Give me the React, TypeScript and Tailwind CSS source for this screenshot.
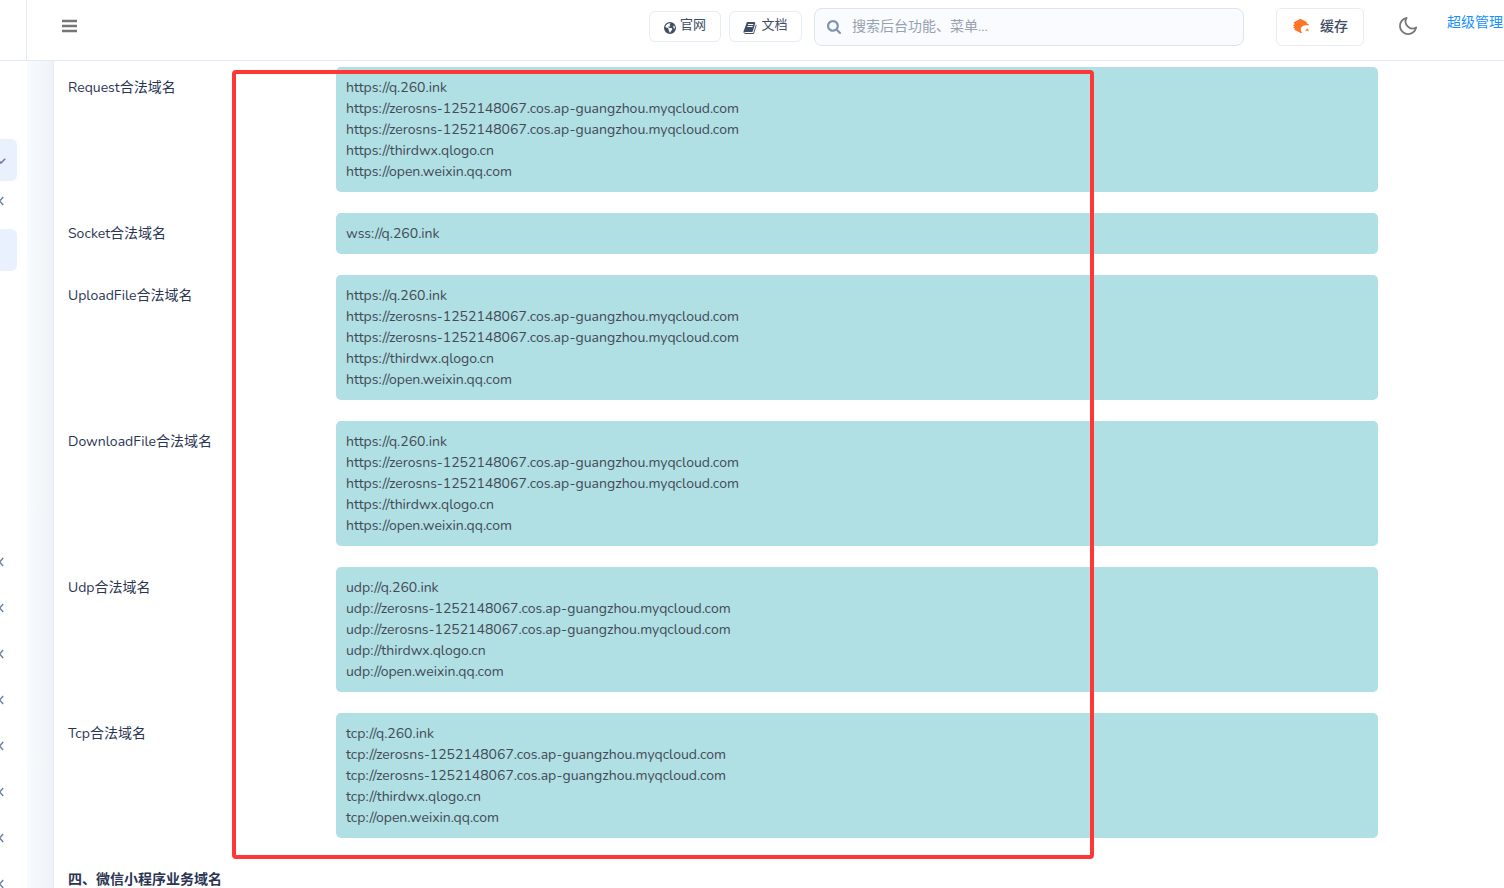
import React from 'react';
import { FaEarthAmericas } from 'react-icons/fa6';

const hosts = [
  'q.260.ink',
  'zerosns-1252148067.cos.ap-guangzhou.myqcloud.com',
  'zerosns-1252148067.cos.ap-guangzhou.myqcloud.com',
  'thirdwx.qlogo.cn',
  'open.weixin.qq.com',
];

const rows = [
  { label: 'Request合法域名', urls: hosts.map((h) => `https://${h}`) },
  { label: 'Socket合法域名', urls: ['wss://q.260.ink'] },
  { label: 'UploadFile合法域名', urls: hosts.map((h) => `https://${h}`) },
  { label: 'DownloadFile合法域名', urls: hosts.map((h) => `https://${h}`) },
  { label: 'Udp合法域名', urls: hosts.map((h) => `udp://${h}`) },
  { label: 'Tcp合法域名', urls: hosts.map((h) => `tcp://${h}`) },
];

const collapsedItems = [1, 2, 3, 4, 5, 6, 7, 8];

function AngleLeft() {
  return (
    <svg viewBox="0 0 6 10" className="h-[10px] w-[6px] shrink-0" fill="none" stroke="#6b7f9e" strokeWidth="1.4" aria-hidden="true">
      <path d="M5.2 1 L1.6 5 L5.2 9" />
    </svg>
  );
}

function AngleDown() {
  return (
    <svg viewBox="0 0 10 6" className="h-[6px] w-[10px] shrink-0" fill="none" stroke="#6b7f9e" strokeWidth="1.6" aria-hidden="true">
      <path d="M0.8 0.8 L5 5 L9.2 0.8" />
    </svg>
  );
}

function BookIcon() {
  return (
    <svg viewBox="0 0 1792 1792" className="mt-1 size-[14px]" fill="currentColor" aria-hidden="true">
      <path d="M1703 478q40 57 18 129l-275 906q-19 64-76.5 107.5t-122.5 43.5h-923q-77 0-148.5-53.5t-99.5-131.5q-24-67-2-127 0-4 3-27t4-37q1-8-3-21.5t-3-19.5q2-11 8-21t16.5-23.5 16.5-23.5q23-38 45-91.5t30-91.5q3-10 .5-30t-.5-28q3-11 17-28t17-23q21-36 42-92t25-90q1-9-2.5-32t.5-28q4-13 22-30.5t22-22.5q19-26 42.5-84.5t27.5-96.5q1-8-3-25.5t-2-26.5q2-8 9-18t18-23 17-21q8-12 16.5-30.5t15-35 16-36 19.5-32 26.5-23.5 36-11.5 47.5 5.5l-1 3q38-9 51-9h761q74 0 114 56t18 130l-274 906q-36 119-71.5 153.5t-128.5 34.5h-869q-27 0-38 15-11 16-1 43 24 70 144 70h923q29 0 56-15.5t35-41.5l300-987q7-22 5-57 38 15 59 43zm-1064 2q-4 13 2 22.5t20 9.5h608q13 0 25.5-9.5t16.5-22.5l21-64q4-13-2-22.5t-20-9.5h-608q-13 0-25.5 9.5t-16.5 22.5zm-83 256q-4 13 2 22.5t20 9.5h608q13 0 25.5-9.5t16.5-22.5l21-64q4-13-2-22.5t-20-9.5h-608q-13 0-25.5 9.5t-16.5 22.5z" />
    </svg>
  );
}

function SearchIcon() {
  return (
    <svg viewBox="0 128 1664 1664" className="size-[14px] shrink-0 text-[#8193ad]" fill="currentColor" aria-hidden="true">
      <path d="M1152 832q0-185-131.5-316.5t-316.5-131.5-316.5 131.5-131.5 316.5 131.5 316.5 316.5 131.5 316.5-131.5 131.5-316.5zm512 832q0 52-38 90t-90 38q-54 0-90-38l-343-342q-179 124-399 124-143 0-273.5-55.5t-225-150-150-225-55.5-273.5 55.5-273.5 150-225 225-150 273.5-55.5 273.5 55.5 225 150 150 225 55.5 273.5q0 220-124 399l343 343q37 37 37 90z" />
    </svg>
  );
}

function CacheMark() {
  return (
    <svg viewBox="0 0 18 16" className="h-4 w-[18px]" aria-hidden="true">
      <path
        fill="#ff7426"
        d="M8.5 0.8 L14.8 4 L14.8 5.4 L17 6.2 L16.2 7.4 C12 6.4 8.8 8.4 8.8 11.4 C8.8 13 9.4 14.2 10.4 14.8 L8.6 15 L2 11.6 L3 10.6 L1 9.6 L2.8 8.6 L0.8 7.2 L2.8 6.2 L1.4 4.6 Z"
      />
      <path fill="#ff7426" d="M12.8 12.8 L14 12 L15 10.2 L16.2 11.6 L17 12.8 Z" />
    </svg>
  );
}

function Header() {
  return (
    <header className="flex h-[61px] shrink-0 border-b border-[#e3eaf4] bg-white">
      <div className="w-[27px] shrink-0 border-r border-[#e3eaf4]" />
      <div className="flex min-w-0 flex-1 items-start pt-2 pl-[34px]">
        <button type="button" aria-label="菜单" className="flex h-9 w-4 items-center justify-center text-[#757575]">
          <svg viewBox="0 0 16 14" className="h-[14px] w-4" fill="currentColor" aria-hidden="true">
            <path d="M1 .8h15v2.4H1zM1 5.8h15v2.4H1zM1 10.8h15v2.4H1z" />
          </svg>
        </button>
        <div className="ml-auto flex shrink-0 items-start">
          <a href="#site" className="mt-[3px] flex h-[31px] w-[72px] items-center justify-center gap-1 rounded-md border border-[#e6ecf5] pb-[2px] text-[13px] text-[#3f4d67]">
            <FaEarthAmericas className="mt-1 size-3" />
            官网
          </a>
          <a href="#docs" className="mt-[3px] ml-2 flex h-[31px] w-[73px] items-center justify-center gap-1 rounded-md border border-[#e6ecf5] pb-[2px] text-[13px] text-[#3f4d67]">
            <BookIcon />
            文档
          </a>
          <label className="ml-3 flex h-[38px] w-[430px] items-center gap-[11px] rounded-lg border border-[#dbe4f0] bg-[#f9fbff] px-3">
            <SearchIcon />
            <input
              type="text"
              aria-label="搜索"
              placeholder="搜索后台功能、菜单..."
              className="min-w-0 flex-1 bg-transparent pb-[2px] text-[14px] outline-none placeholder:text-[#98a1b0]"
            />
          </label>
          <button type="button" className="ml-8 flex h-[38px] w-[88px] items-center justify-center gap-[10px] rounded-md border border-[#e6ecf5] pb-[2px] text-[14px] font-medium text-[#3f4d67]">
            <CacheMark />
            缓存
          </button>
          <button type="button" aria-label="深色模式" className="ml-[34px] flex h-9 w-5 items-center justify-center text-[#777777]">
            <svg viewBox="0 0 20 20" className="size-5" fill="none" stroke="currentColor" strokeWidth="1.8" strokeLinejoin="round" aria-hidden="true">
              <path d="M8.6 1.8 A8.2 8.2 0 1 0 18.2 11.4 A7 7 0 0 1 8.6 1.8 Z" />
            </svg>
          </button>
          <a href="#account" className="ml-[29px] w-[57px] text-[14px] leading-[30px] whitespace-nowrap text-[#1890ff]">
            超级管理
          </a>
        </div>
      </div>
    </header>
  );
}

function Sidebar() {
  return (
    <aside className="w-[27px] shrink-0 overflow-hidden bg-white pt-[78px]">
      <nav className="flex flex-col pr-[10px]">
        <a href="#apps" aria-label="应用" className="flex h-[42px] items-center justify-end rounded-r-md bg-[#e9f1ff] pt-[2px] pr-[11px]">
          <AngleDown />
        </a>
        <a href="#group" aria-label="分组" className="flex h-10 items-center justify-end pr-[13px]">
          <AngleLeft />
        </a>
        <a href="#current" aria-label="当前" className="mt-2 h-[42px] rounded-r-md bg-[#e9f1ff]" />
        <div className="mt-[269px] flex flex-col gap-1">
          {collapsedItems.map((n) => (
            <a key={n} href={`#menu-${n}`} aria-label={`菜单 ${n}`} className="flex h-[42px] items-center justify-end pt-[2px] pr-[13px]">
              <AngleLeft />
            </a>
          ))}
        </div>
      </nav>
    </aside>
  );
}

export default function App() {
  return (
    <div className="flex h-screen flex-col overflow-hidden bg-white font-['Nunito','Noto_Sans','Noto_Sans_CJK_SC',sans-serif]">
      <Header />
      <div className="flex min-h-0 flex-1">
        <Sidebar />
        <div className="w-[27px] shrink-0 border-r border-[#e3eaf4] bg-linear-to-r from-[#f7fbfe] to-[#eff3f7]" />
        <main className="relative min-w-0 flex-1 overflow-hidden pt-[6px] pr-[126px] pl-[14px] text-[14px] leading-[21px]">
          <dl className="flex flex-col gap-[21px]">
            {rows.map((row) => (
              <div key={row.label} className="flex">
                <dt className="w-[268px] shrink-0 pt-[10px] text-[#2b3553]">{row.label}</dt>
                <dd className="min-w-0 flex-1 rounded-[5px] bg-[#b0dfe4] p-[10px] text-[#434a54]">
                  {row.urls.map((url, i) => (
                    <div key={i}>{url}</div>
                  ))}
                </dd>
              </div>
            ))}
          </dl>
          <h2 className="mt-[31px] font-bold text-[#2b3553]">四、微信小程序业务域名</h2>
          <div className="pointer-events-none absolute top-[9px] left-[178px] h-[789px] w-[862px] rounded-[4px] border-4 border-[#ff3737]" />
        </main>
      </div>
    </div>
  );
}
